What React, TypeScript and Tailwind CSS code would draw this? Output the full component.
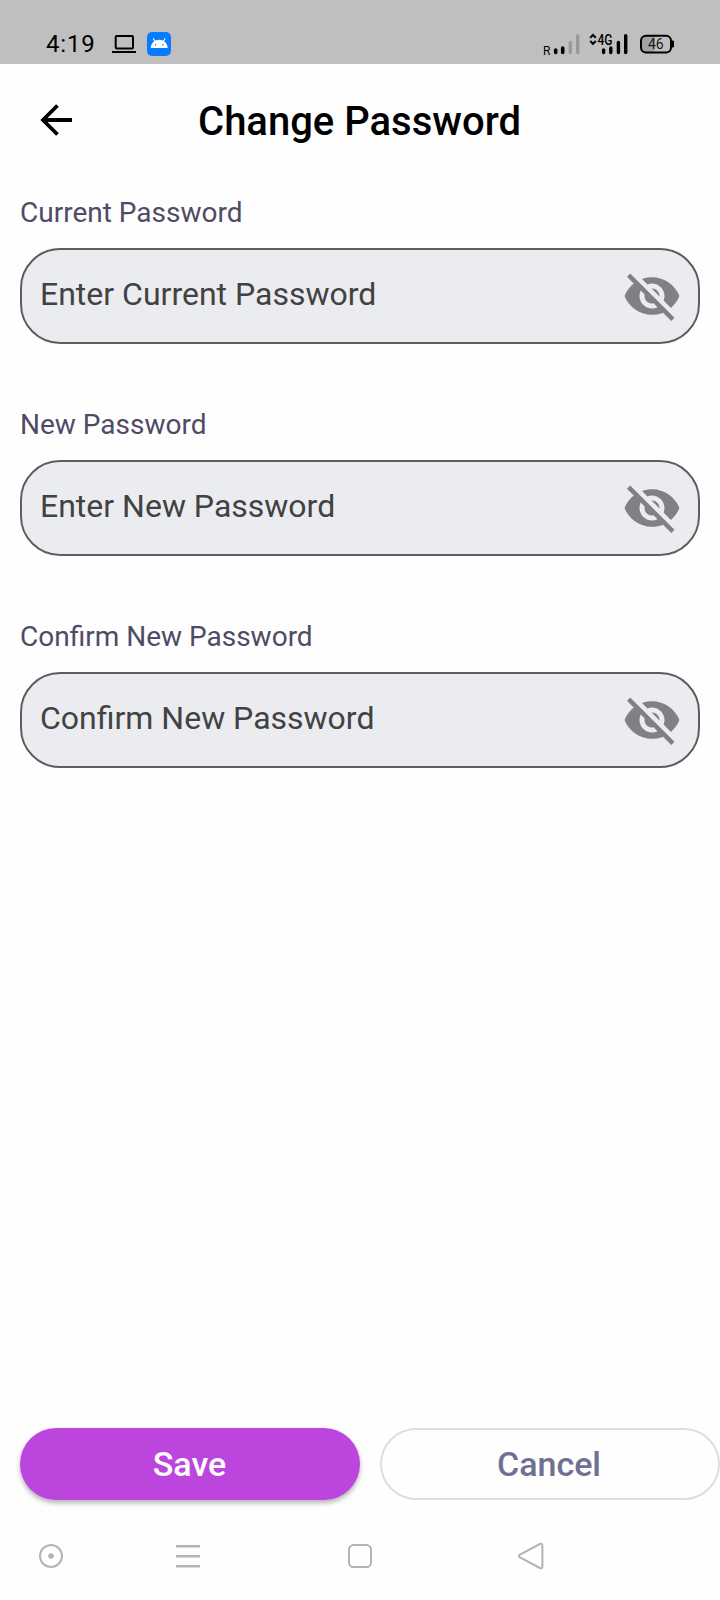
import { MdVisibilityOff } from "react-icons/md";

const fields = [
  { label: "Current Password", placeholder: "Enter Current Password" },
  { label: "New Password", placeholder: "Enter New Password" },
  { label: "Confirm New Password", placeholder: "Confirm New Password" },
];

function StatusBar() {
  return (
    <div className="flex h-16 items-start justify-between bg-[#bfbfbf] pt-5 pr-[45px] pl-[46px] text-black">
      <div className="flex h-12 items-center">
        <span className="w-[66px] text-[24px] leading-none tracking-[0.8px]">4:19</span>
        <svg className="h-6 w-6" viewBox="0 0 24 24" fill="none">
          <rect x="3.7" y="4" width="17.3" height="12.4" rx="1" stroke="#000" strokeWidth="2" />
          <path d="M0 20h24" stroke="#000" strokeWidth="2" />
        </svg>
        <svg className="ml-[11px] h-6 w-6" viewBox="0 0 24 24">
          <rect width="24" height="24" rx="5" fill="#087cff" />
          <path d="M3.7 16a8.5 8.2 0 0 1 17 0z" fill="#fff" />
          <path d="M6.2 6.3l2.2 4M18.2 6.3l-2.2 4" stroke="#fff" strokeWidth="1.1" />
          <circle cx="8.5" cy="12.8" r="0.8" fill="#087cff" />
          <circle cx="16" cy="12.8" r="0.8" fill="#087cff" />
        </svg>
      </div>
      <svg
        className="h-12 w-[132px]"
        viewBox="0 0 132 48"
        fill="none"
        fontFamily="Roboto, sans-serif"
      >
        <text x="0" y="35" fontSize="12" fill="#000">R</text>
        <path d="M12.7 30v2.5M19.7 28v4.5" stroke="#000" strokeWidth="3.6" strokeLinecap="round" />
        <path d="M27.3 22.5v10M34.7 15.7v16.8" stroke="#999" strokeWidth="3.4" strokeLinecap="round" />
        <path d="M47.2 17.8l2.8-2.8 2.8 2.8M47.2 21l2.8 2.8 2.8-2.8" stroke="#000" strokeWidth="2" />
        <text x="54.5" y="25" fontSize="14" fontWeight="500" textLength="15" lengthAdjust="spacingAndGlyphs" fill="#000">4G</text>
        <path d="M60.6 30v2.5M67.8 28v4.5M75.4 22.5v10M82.7 15.7v16.8" stroke="#000" strokeWidth="3.4" strokeLinecap="round" />
        <path d="M102 16h10v16h-10a4 4 0 0 1-4-4v-8a4 4 0 0 1 4-4z" fill="#a3a3a3" />
        <rect x="98" y="15.8" width="30" height="16.8" rx="5" stroke="#000" strokeWidth="2" />
        <path d="M129 21h1.5v6H129z" fill="#000" stroke="#000" />
        <text x="105" y="29" fontSize="14" fill="#1a1a1a">46</text>
      </svg>
    </div>
  );
}

function Header() {
  return (
    <header className="grid h-28 grid-cols-[112px_1fr_113px] items-center">
      <svg className="ml-8 h-12 w-12" viewBox="0 0 48 48" fill="none">
        <path d="M40 24H10M25.5 9.5L11 24l14.5 14.5" stroke="#000" strokeWidth="3.8" />
      </svg>
      <h1 className="pt-1 text-center text-[40px] leading-none font-medium text-black">
        Change Password
      </h1>
    </header>
  );
}

function PasswordField({ label, placeholder }: { label: string; placeholder: string }) {
  return (
    <div>
      <label className="block h-[34px] pt-px text-[28px] leading-8 text-[#4f4b66]">{label}</label>
      <div className="mt-[18px] flex h-24 items-center justify-between rounded-[40px] border-2 border-[#5e5e60] bg-[#ebecf0] pr-4 pl-[18px]">
        <span className="pb-1 text-[32px] leading-none text-[#424242]">{placeholder}</span>
        <MdVisibilityOff className="h-[60px] w-[60px] text-[#808183]" />
      </div>
    </div>
  );
}

function NavBar() {
  return (
    <nav className="flex h-[100px] items-center pt-[11px] pl-[39px] text-[#b4b4b4]">
      <svg className="h-6 w-6" viewBox="0 0 24 24" fill="none">
        <circle cx="12" cy="12" r="11" stroke="currentColor" strokeWidth="2" />
        <circle cx="12" cy="12" r="2.8" fill="currentColor" />
      </svg>
      <svg className="ml-[113px] h-6 w-6" viewBox="0 0 24 24">
        <path d="M0 2.3h24M0 12.3h24M0 22.3h24" stroke="currentColor" strokeWidth="2.4" />
      </svg>
      <svg className="ml-[148px] h-6 w-6" viewBox="0 0 24 24" fill="none">
        <rect x="1" y="1" width="22" height="22" rx="4.5" stroke="currentColor" strokeWidth="2" />
      </svg>
      <svg className="ml-[145px] h-7 w-7" viewBox="0 0 28 28" fill="none">
        <path
          d="M3 12.6L22.8 2Q25.4 1 25.4 3.8V24.4Q25.4 27 22.8 26L3 15.4Q.8 14 3 12.6Z"
          stroke="currentColor"
          strokeWidth="2"
        />
      </svg>
    </nav>
  );
}

export default function App() {
  return (
    <div className="flex h-[1600px] w-[720px] flex-col bg-[#fefefe] font-[Roboto,sans-serif]">
      <StatusBar />
      <Header />
      <main className="flex flex-1 flex-col gap-16 px-5 pt-5">
        {fields.map((field) => (
          <PasswordField key={field.label} {...field} />
        ))}
      </main>
      <div className="grid h-[72px] grid-cols-2 gap-5 pl-5">
        <button className="rounded-full bg-[#bc46dd] pr-px text-[34px] leading-none font-medium text-white shadow-[0_3px_5px_rgba(0,0,0,0.3)]">
          Save
        </button>
        <button className="rounded-full border-2 border-[#dedede] pr-0.5 text-[34px] leading-none font-medium text-[#6e7191]">
          Cancel
        </button>
      </div>
      <NavBar />
    </div>
  );
}
